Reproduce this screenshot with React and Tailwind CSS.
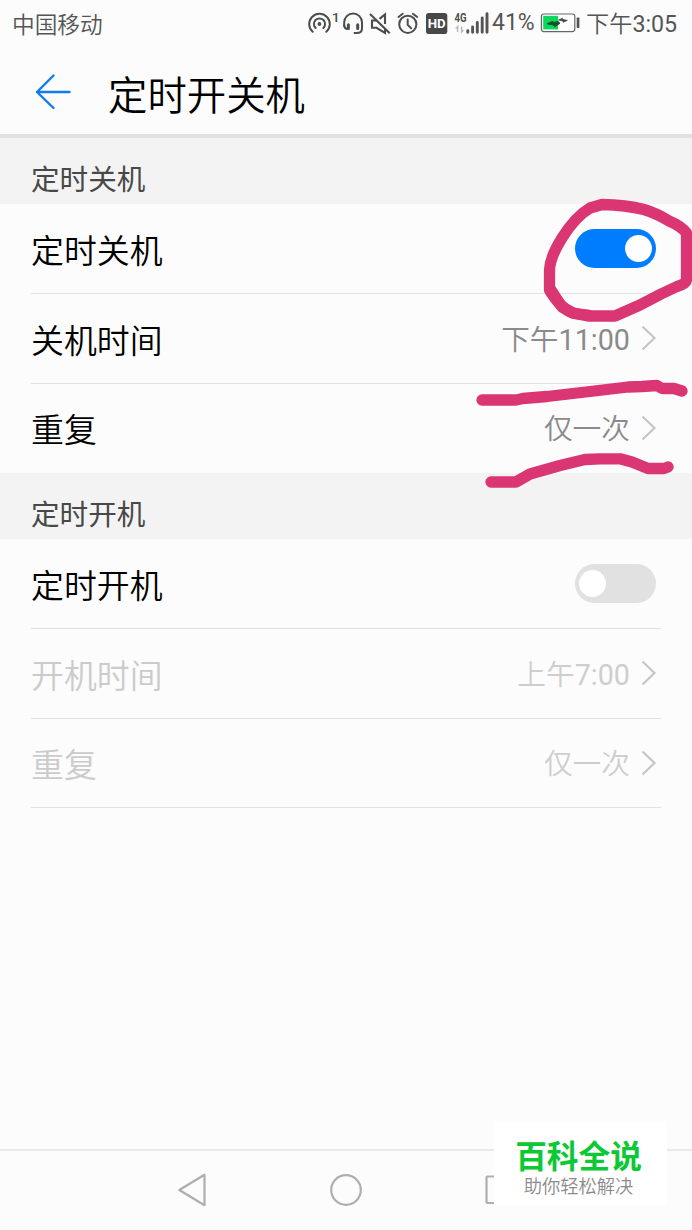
import React from "react";

const CJK = "font-['Roboto','Noto_Sans_CJK_SC',sans-serif]";

function StatusBar() {
  return (
    <div className="flex h-12 shrink-0 items-center text-[#555]">
      <span className="ml-3 w-[293px] pt-[3px] text-[22.7px] leading-[48px] font-[350]">中国移动</span>
      <svg className="h-12 w-[35px]" viewBox="305 0 35 48" fill="none" stroke="#4d4d4d" strokeWidth="2" strokeLinecap="round">
        <path d="M312.7 31.8A10.3 10.3 0 1 1 326.3 31.8" />
        <path d="M315.6 28A5.6 5.6 0 1 1 323.4 28" />
        <circle cx="319.4" cy="24" r="1.9" fill="#4d4d4d" stroke="none" />
        <text x="332" y="22" fontSize="13.5" fontWeight="500" fill="#4d4d4d" stroke="none">1</text>
      </svg>
      <svg className="h-12 w-[26px]" viewBox="340 0 26 48" fill="none" stroke="#4d4d4d" strokeWidth="2" strokeLinecap="round">
        <path d="M344.2 26V22.4A8.9 8.9 0 0 1 362 22.4V28.5Q362 33 356.5 33H354.5" />
        <path d="M348.4 24.8V28.4M357.7 24.8V28.4" strokeWidth="3" />
        <path d="M344.2 25.5Q344.6 28.5 347 29" />
      </svg>
      <svg className="h-12 w-[28px]" viewBox="366 0 28 48" fill="none" stroke="#4d4d4d" strokeWidth="2.1">
        <path d="M370 14L389.7 33.3" />
        <path d="M376.5 20.5H372V27.8H376.5L385 33V29M379.5 18.8L385 14.5V24" />
      </svg>
      <svg className="h-12 w-[28px]" viewBox="394 0 28 48" fill="none" stroke="#4d4d4d" strokeWidth="2" strokeLinecap="round">
        <circle cx="407.8" cy="24.3" r="8.6" />
        <path d="M407.7 19.5V24.8L411.2 28.4M398.5 17L402.7 13.8M412.9 13.8L417.2 17" />
      </svg>
      <svg className="h-12 w-[29px]" viewBox="422 0 29 48">
        <rect x="426" y="13" width="21.3" height="21" rx="2.8" fill="#484848" />
        <text x="436.7" y="28.3" textAnchor="middle" fontSize="13.5" fontWeight="700" fill="#fff" textLength="18" lengthAdjust="spacingAndGlyphs">HD</text>
      </svg>
      <svg className="h-12 w-[40px]" viewBox="451 0 40 48" fill="none" stroke="#555" strokeWidth="2.9">
        <text x="454.5" y="22" fontSize="13" fontWeight="700" fill="#4d4d4d" stroke="none" textLength="12" lengthAdjust="spacingAndGlyphs">4G</text>
        <path d="M457.6 32V26.6L455.8 28.6M461.6 26.6V32L463.4 30" stroke="#b8b8b8" strokeWidth="1.4" />
        <path d="M467.8 32.2V30.8M472.6 32.2V27M477.3 32.2V22.5M482.2 32.2V18M487 32.2V13.7" strokeLinecap="round" strokeWidth="2.9" />
      </svg>
      <span className="-mt-[3px] w-[48px] pl-px text-[23px] leading-[44px]">41%</span>
      <svg className="h-12 w-[44px]" viewBox="539 0 44 48">
        <rect x="541.4" y="14" width="33.4" height="17.6" rx="2.5" fill="#fff" stroke="#666" strokeWidth="1.2" />
        <rect x="543.2" y="15.8" width="14.9" height="13.6" fill="#0bd65e" />
        <path d="M547 23.8L553 21.3V22.8L558 21.5L560 23.3L554.5 26.8V25.3Z" fill="#174f28" stroke="#174f28" />
        <path d="M558.5 20L562.5 18.2V19.3L567.3 20.4L563 22.3V21Z" fill="#444" stroke="#444" strokeWidth=".7" />
        <rect x="576.7" y="17.5" width="2.7" height="10.5" rx=".7" fill="#555" />
      </svg>
      <span className="ml-[3px] text-[23.2px] leading-[48px] whitespace-nowrap"><span className="font-[350]">下午</span>3:05</span>
    </div>
  );
}

function TitleBar() {
  return (
    <header className="flex h-[90px] shrink-0 items-center border-b-4 border-[#e1e1e1] pl-[35px]">
      <svg className="mt-[2px] h-[38px] w-[36px]" viewBox="0 0 36 38" fill="none" stroke="#0f7cf0" strokeWidth="2.4" strokeLinecap="round" strokeLinejoin="round">
        <path d="M18.5 2.5L2 19L18.5 35M2 19H34.5" />
      </svg>
      <h1 className="ml-[37px] pt-[11px] text-[39.4px] leading-[50px] font-[350] text-black">定时开关机</h1>
    </header>
  );
}

function SectionHeader({ children }) {
  return (
    <h2 className="h-[66px] shrink-0 bg-[#f3f3f3] pl-[31px] pt-[16px] text-[28.6px] leading-[52px] font-normal text-[#484848]">
      {children}
    </h2>
  );
}

function Switch({ on }) {
  return (
    <span
      className={`mr-[5px] flex h-[39px] w-[81px] items-center rounded-full px-1 ${
        on ? "justify-end bg-[#007dff]" : "justify-start bg-[#e1e1e1]"
      }`}
    >
      <span className="h-[27px] w-[27px] rounded-full bg-white" />
    </span>
  );
}

function Row({ label, value, disabled, last, children }) {
  return (
    <div
      className={`mx-[31px] flex shrink-0 items-center justify-between border-b ${
        value && !last ? "h-[90px]" : "h-[89.5px]"
      } ${last && !disabled ? "border-transparent" : "border-[#e2e2e2]"} ${disabled ? "text-[#cbcbcb]" : "text-black"}`}
    >
      <span className="pt-[7px] text-[32.9px] leading-[48px] font-[350]">{label}</span>
      {children}
      {value && (
        <span className="mr-1 flex items-center">
          <span className={`pt-[3px] text-[28.7px] leading-[44px] font-normal ${disabled ? "text-[#cecece]" : "text-[#8a8a8a]"}`}>
            <span className="font-[350]">{value.slice(0, 2)}</span>
            {/[0-9]/.test(value) ? value.slice(2) : <span className="font-[350]">{value.slice(2)}</span>}
          </span>
          <svg className="ml-[11px] h-[26px] w-[16px]" viewBox="0 0 16 26" fill="none" stroke="#c6c6c6" strokeWidth="2.2">
            <path d="M1.5 1.5L13.5 13L1.5 24.5" />
          </svg>
        </span>
      )}
    </div>
  );
}

function NavBar() {
  return (
    <nav className="mt-auto flex h-[81px] shrink-0 items-center justify-between border-t-2 border-[#e9e9e9] pr-[174px] pb-[2px] pl-[177px]">
      <svg className="h-9 w-[30px]" viewBox="0 0 30 36" fill="none" stroke="#aeaeae" strokeWidth="2.2" strokeLinejoin="round">
        <path d="M2.3 18L27.5 2.8V33.2Z" />
      </svg>
      <svg className="h-9 w-9" viewBox="0 0 36 36" fill="none" stroke="#aeaeae" strokeWidth="2.2">
        <circle cx="18" cy="18" r="14.8" />
      </svg>
      <svg className="h-9 w-[34px]" viewBox="0 0 34 36" fill="none" stroke="#aeaeae" strokeWidth="2.2">
        <rect x="2.5" y="4.5" width="27" height="26.5" rx="1" />
      </svg>
    </nav>
  );
}

function Annotations() {
  return (
    <svg className="pointer-events-none absolute inset-0 h-[1230px] w-[692px]" viewBox="0 0 692 1230" fill="none" stroke="#db3674" strokeWidth="11.3" strokeLinecap="round" strokeLinejoin="round">
      <path d="M602 204.500Q626 205 644 209.500Q657 213.500 669 221Q681 226 686.500 233V280Q686 284 677 286.500L661 294L640 305L615 316H588L573 313Q561 309 549.500 290V270Q550 257 562 238Q575 217 590 208Z" />
      <path d="M551 290L562 307L574 313.500L588 315" />
      <path d="M482 400H516L523 398.500L547 396.500L590 391.500L628 387L642 386.500L657 385.500L662 388.500H674L682 391" />
      <path d="M491 482H516L530 474L560 465.500L585 459.500L600 458.800H620L632 462L648 468.500H664L668 467" />
    </svg>
  );
}

function Badge() {
  return (
    <div className="absolute top-[1121px] left-[494px] flex h-[84px] w-[173px] flex-col items-center bg-white pr-[4px]">
      <div className="mt-[15px] text-[31.7px] leading-[44px] font-bold text-[#0bc834]">百科全说</div>
      <div className="-mt-[6px] text-[18.3px] leading-[26px] font-[350] text-[#8b8b8b]">助你轻松解决</div>
    </div>
  );
}

export default function App() {
  return (
    <div className={`relative flex h-[1230px] w-[692px] flex-col overflow-hidden bg-[#fcfcfc] ${CJK}`}>
      <StatusBar />
      <TitleBar />
      <SectionHeader>定时关机</SectionHeader>
      <Row label="定时关机"><Switch on /></Row>
      <Row label="关机时间" value="下午11:00" />
      <Row label="重复" value="仅一次" last />
      <SectionHeader>定时开机</SectionHeader>
      <Row label="定时开机"><Switch /></Row>
      <Row label="开机时间" value="上午7:00" disabled />
      <Row label="重复" value="仅一次" disabled last />
      <NavBar />
      <Annotations />
      <Badge />
    </div>
  );
}
